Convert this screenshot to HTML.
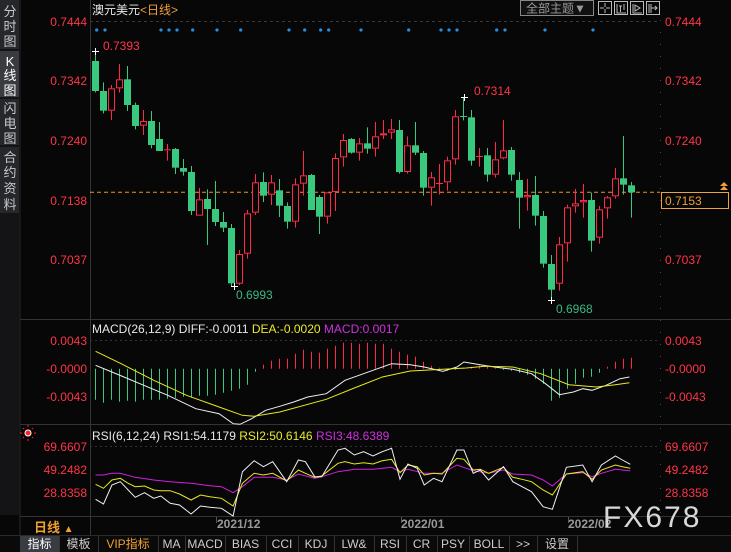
<!DOCTYPE html>
<html><head><meta charset="utf-8">
<style>
html,body{margin:0;padding:0;background:#070707;width:731px;height:552px;overflow:hidden;font-family:"Liberation Sans","Noto Sans CJK SC",sans-serif;}
svg{display:block}
text{font-family:"Liberation Sans","Noto Sans CJK SC",sans-serif;}
</style></head><body>
<svg id="s" width="731" height="552" viewBox="0 0 731 552" xmlns="http://www.w3.org/2000/svg">
<rect width="731" height="552" fill="#070707"/>
<rect x="0" y="0" width="19" height="515" fill="#141416"/>
<rect x="0" y="0" width="19" height="49" fill="#26272b"/>
<rect x="0" y="51" width="19" height="46" fill="#3a3b40"/>
<rect x="0" y="99" width="19" height="46" fill="#26272b"/>
<rect x="0" y="147" width="19" height="66" fill="#26272b"/>
<g fill="#c8c8c8" font-size="13" text-anchor="middle">
<text x="10" y="16">分</text><text x="10" y="31">时</text><text x="10" y="46">图</text>
<text x="10" y="66" fill="#fff">K</text><text x="10" y="80" fill="#fff">线</text><text x="10" y="95" fill="#fff">图</text>
<text x="10" y="113">闪</text><text x="10" y="128">电</text><text x="10" y="143">图</text>
<text x="10" y="162">合</text><text x="10" y="177">约</text><text x="10" y="193">资</text><text x="10" y="209">料</text>
</g>
<line x1="20" y1="0" x2="20" y2="535" stroke="#2a2a2a"/>
<line x1="90.5" y1="0" x2="90.5" y2="535" stroke="#333"/>
<line x1="20" y1="319.5" x2="731" y2="319.5" stroke="#333"/>
<line x1="20" y1="424.5" x2="731" y2="424.5" stroke="#333"/>
<line x1="20" y1="516.5" x2="731" y2="516.5" stroke="#333"/>
<line x1="660.5" y1="20" x2="660.5" y2="515" stroke="#444" stroke-dasharray="1 11"/>
<line x1="90" y1="21.5" x2="660" y2="21.5" stroke="#3a3a3a" stroke-dasharray="3 3"/>
<line x1="90" y1="340.5" x2="660" y2="340.5" stroke="#333" stroke-dasharray="2 3"/>
<line x1="90" y1="446.5" x2="660" y2="446.5" stroke="#333" stroke-dasharray="2 3"/>
<text x="92" y="14" font-size="12" fill="#e8e8e8">澳元美元<tspan fill="#f0a040">&lt;日线&gt;</tspan></text>
<rect x="520.5" y="0.5" width="73" height="15" fill="#111" stroke="#888"/>
<text x="526" y="12.5" font-size="12" fill="#999">全部主题▼</text>
<g stroke="#bbb" fill="none">
<rect x="598.5" y="1.5" width="13" height="13"/><rect x="614.5" y="1.5" width="13" height="13"/><rect x="630.5" y="1.5" width="13" height="13"/><rect x="646.5" y="1.5" width="13" height="13"/>
<path d="M605 3v4M605 9v4M600 8h4M606 8h4"/>
<path d="M617 4v9h9M619 6h3M620.5 6v6M624 4v6"/>
<path d="M633 4v9h9M635 5l5 3-5 3z"/>
<path d="M649 4v9M651 4v9M651 8h6M655 6l2 2-2 2"/>
</g>
<g font-size="12" fill="#ff3548">
<text x="87" y="26" text-anchor="end">0.7444</text>
<text x="87" y="85" text-anchor="end">0.7342</text>
<text x="87" y="145" text-anchor="end">0.7240</text>
<text x="87" y="205" text-anchor="end">0.7138</text>
<text x="87" y="264" text-anchor="end">0.7037</text>
<text x="665" y="26">0.7444</text>
<text x="665" y="85">0.7342</text>
<text x="665" y="145">0.7240</text>
<text x="665" y="264">0.7037</text>
<text x="87" y="345" text-anchor="end">0.0043</text>
<text x="87" y="373" text-anchor="end">-0.0000</text>
<text x="87" y="401" text-anchor="end">-0.0043</text>
<text x="665" y="345">0.0043</text>
<text x="665" y="373">-0.0000</text>
<text x="665" y="401">-0.0043</text>
<text x="87" y="451" text-anchor="end">69.6607</text>
<text x="87" y="474" text-anchor="end">49.2482</text>
<text x="87" y="497" text-anchor="end">28.8358</text>
<text x="665" y="451">69.6607</text>
<text x="665" y="474">49.2482</text>
<text x="665" y="497">28.8358</text>
</g>
<line x1="90" y1="192.3" x2="660" y2="192.3" stroke="#f0902a" stroke-dasharray="4 3"/>
<rect x="661.5" y="192.5" width="67" height="16" fill="#070707" stroke="#f0a040"/>
<text x="665" y="205" font-size="12" fill="#f0a040">0.7153</text>
<path d="M720 186l4-4 4 4zM720 190l4-4 4 4z" fill="#f0a040"/>
<g id="dots" fill="#2a8ee0"></g>
<g id="candles"></g>
<g font-size="12">
<text x="103" y="50" fill="#ff3548">0.7393</text>
<text x="236" y="299" fill="#3bb885">0.6993</text>
<text x="474" y="95" fill="#ff3548">0.7314</text>
<text x="556" y="313" fill="#3bb885">0.6968</text>
</g>
<g stroke="#fff">
<path d="M92 51.5h7M95.5 48v7"/>
<path d="M231 286.5h7M234.5 283v7"/>
<path d="M461 97.5h7M464.5 94v7"/>
<path d="M548 300.5h7M551.5 297v7"/>
</g>
<text x="92" y="333" font-size="12" fill="#e8e8e8">MACD(26,12,9) DIFF:-0.0011 <tspan fill="#e8e830">DEA:-0.0020</tspan> <tspan fill="#d030e0">MACD:0.0017</tspan></text>
<g id="hist"></g>
<polyline id="diff" fill="none" stroke="#f0f0f0" stroke-width="1"/>
<polyline id="dea" fill="none" stroke="#e8e820" stroke-width="1"/>
<circle cx="28" cy="433" r="3" fill="#ff2020" stroke="#fff" stroke-width="1"/>
<path d="M28 427v-2M28 439v2M22 433h-2M34 433h2M24 429l-1-1M32 429l1-1M24 437l-1 1M32 437l1 1" stroke="#ff2020"/>
<text x="92" y="440" font-size="12" fill="#e8e8e8">RSI(6,12,24) RSI1:54.1179 <tspan fill="#e8e830">RSI2:50.6146</tspan> <tspan fill="#d030e0">RSI3:48.6389</tspan></text>
<polyline id="r3" fill="none" stroke="#d020e0"/>
<polyline id="r2" fill="none" stroke="#e8e820"/>
<polyline id="r1" fill="none" stroke="#f0f0f0"/>
<g stroke="#555"><path d="M216.5 517v6M401.5 517v6M568.5 517v6"/></g>
<g font-size="12" fill="#999" font-weight="bold">
<text x="217" y="528">2021/12</text>
<text x="401" y="528">2022/01</text>
<text x="568" y="528">2022/02</text>
</g>
<text x="603" y="527" font-size="30" fill="#d8d8d8" letter-spacing="2">FX678</text>
<text x="34" y="532" font-size="13" fill="#f0a030" font-weight="bold">日线 <tspan font-size="10">▲</tspan></text>
<rect x="0" y="535" width="731" height="17" fill="#0a0a0a"/>
<rect x="20" y="535" width="39" height="17" fill="#3a3c44"/>
<g stroke="#333"><path id="tabsep" d=""/></g>
<g font-size="12" fill="#ccc" text-anchor="middle" id="tabs"></g>
<line x1="0" y1="535.5" x2="731" y2="535.5" stroke="#2a2a2a"/>
</svg>
<script>
var NS="http://www.w3.org/2000/svg";
function el(t,a,p){var e=document.createElementNS(NS,t);for(var k in a)e.setAttribute(k,a[k]);(p||document.getElementById('s')).appendChild(e);return e;}
[96.7,105,161,169,177,192.7,217,240.7,289,304.7,320.7,328.7,361,408.7,441,449,457,496.7,505,545,593].forEach(function(x){el('circle',{cx:x,cy:30,r:1.6},document.getElementById('dots'));});
var C=[
['g',63,153,38,157],['g',153,212,127,220],['r',145,212,135,240],['r',118,145,72,158],['g',118,195,78,213],['g',195,258,188,268],['r',243,257,210,285],['g',243,315,213,325],['g',297,333,246,333],['r',328,330,312,362],
['g',327,383,324,402],['g',384,395,357,407],['g',396,513,378,525],['r',478,527,444,527],['g',477,507,448,615],['g',507,546,423,558],['g',546,563,516,576],['g',564,730,552,738],['r',642,731,630,735],['r',520,641,510,656],
['r',427,518,402,525],['g',426,467,397,486],['r',427,464,405,495],['g',451,497,417,531],['g',498,545,487,566],['r',433,545,415,563],['r',406,431,333,467],['g',405,510,402,510],['g',471,530,465,582],['r',457,530,457,551],
['r',354,456,340,513],['r',300,352,282,380],['g',297,338,294,341],['r',310,338,294,362],['g',310,326,262,341],['r',289,326,246,350],['r',280,286,240,297],['r',268,278,237,297],['g',270,396,240,401],['r',316,396,289,401],
['g',316,338,246,345],['g',339,443,333,467],['r',412,443,396,497],['r',429,431,372,464],['r',361,427,350,452],['r',229,358,210,374],['g',228,230,173,241],['g',232,362,210,377],['r',348,350,324,380],['g',346,404,324,425],
['r',358,404,306,413],['r',331,355,240,358],['g',330,404,321,422],['g',420,473,396,566],['r',465,472,417,512],['g',465,527,408,557],['g',528,671,513,683],['g',672,749,645,785],['r',613,731,591,752],['r',502,610,494,665],
['r',490,499,447,518],['r',480,487,432,533],['g',480,602,458,635],['r',508,593,498,611],['r',472,505,468,536],['r',415,469,384,476],['g',415,434,288,464],['g',436,457,426,533]];
var cg=document.getElementById('candles');
C.forEach(function(c,i){var x=Math.round(95.33+i*8);var y=function(z){return 40+z/3;};
 var col=c[0]=='g'?'#38c97e':'#ff2a48';
 var bt=y(c[1]),bb=y(c[2]);if(bb-bt<1.2){bb=bt+1;}
 if(c[0]=='g'){el('line',{x1:x+0.5,x2:x+0.5,y1:y(c[3]),y2:y(c[4]),stroke:col},cg);el('rect',{x:x-3,y:bt,width:7,height:Math.max(1,bb-bt),fill:col},cg);}
 else{el('line',{x1:x+0.5,x2:x+0.5,y1:y(c[3]),y2:bt,stroke:col},cg);el('line',{x1:x+0.5,x2:x+0.5,y1:bb,y2:y(c[4]),stroke:col},cg);
  if(bb-bt<2){el('line',{x1:x-3,x2:x+4,y1:bt+0.5,y2:bt+0.5,stroke:col},cg);}else el('rect',{x:x-2.5,y:bt+0.5,width:6,height:bb-bt-1,fill:'#070707',stroke:col},cg);}
});
var H=[-31,-34,-31,-33,-32,-33,-31,-31,-31,-30,-29,-28,-29,-27,-27,-26,-24,-22,-20,-16,-3,4,8,10,10,15,19,17,16,20,23,26,26,25,26,25,25,20,17,14,12,7,3,1,-2,-1,1,2,3,2,1,-1,-2,-4,-6,-10,-15,-32,-29,-20,-15,-9,-8,-4,2,7,10,11];
var hg=document.getElementById('hist');
H.forEach(function(h,i){var x=Math.round(95.33+i*8)+0.5;el('line',{x1:x,x2:x,y1:368.7,y2:368.7-h,stroke:h>0?'#ff2a48':'#38c97e'},hg);});
function pts(a,oy){return a.map(function(p){return (p[0]/2.145).toFixed(1)+','+(oy+p[1]/3).toFixed(1);}).join(' ');}
document.getElementById('diff').setAttribute('points',pts([[205,160],[240,180],[300,215],[360,250],[420,290],[470,305],[500,335],[515,337],[540,320],[570,295],[600,283],[630,270],[660,255],[700,245],[740,205],[800,175],[840,155],[880,158],[910,165],[950,178],[980,165],[995,150],[1030,158],[1060,165],[1100,172],[1140,185],[1170,215],[1200,248],[1230,240],[1250,230],[1270,235],[1300,220],[1330,200],[1350,195]],312));
document.getElementById('dea').setAttribute('points',pts([[205,118],[260,155],[330,205],[400,250],[470,285],[520,310],[545,313],[600,300],[700,262],[760,228],[820,195],[880,177],[950,172],[1000,168],[1040,163],[1100,165],[1160,185],[1220,218],[1280,225],[1320,218],[1350,212]],312));
document.getElementById('r1').setAttribute('points',pts([[205,238],[222,252],[240,195],[258,185],[275,210],[290,232],[310,218],[330,235],[345,228],[365,250],[385,255],[410,282],[430,258],[450,262],[475,265],[500,288],[520,155],[545,122],[565,140],[585,125],[615,185],[640,120],[655,125],[675,170],[690,170],[725,90],[740,85],[760,105],[780,95],[800,108],[820,95],[840,85],[858,178],[875,132],[895,145],[910,195],[930,175],[948,185],[980,90],[995,90],[1015,160],[1030,150],[1048,180],[1080,140],[1100,185],[1120,200],[1140,215],[1165,260],[1185,268],[1215,142],[1250,135],[1270,185],[1290,135],[1320,108],[1335,120],[1352,133]],420));
document.getElementById('r2').setAttribute('points',pts([[205,193],[222,205],[240,180],[258,175],[275,190],[290,200],[310,198],[330,210],[345,212],[365,212],[385,222],[410,240],[430,225],[450,230],[475,235],[500,258],[520,190],[545,160],[565,165],[585,160],[615,183],[640,150],[655,160],[675,172],[690,168],[725,130],[740,125],[760,132],[780,128],[800,132],[820,122],[840,118],[858,158],[875,135],[895,140],[910,165],[930,160],[948,162],[980,115],[995,118],[1015,150],[1030,148],[1048,160],[1080,142],[1100,172],[1120,178],[1140,185],[1165,210],[1185,225],[1215,162],[1250,155],[1270,178],[1290,150],[1320,135],[1335,140],[1352,145]],420));
document.getElementById('r3').setAttribute('points',pts([[205,165],[222,165],[240,160],[258,160],[290,172],[330,180],[365,185],[410,190],[450,197],[475,200],[500,218],[520,200],[545,172],[585,172],[615,180],[640,162],[675,175],[690,170],[725,155],[760,148],[800,148],[840,142],[858,155],[875,148],[910,160],[948,160],[980,135],[1015,152],[1048,160],[1080,150],[1100,162],[1140,165],[1165,180],[1185,198],[1215,162],[1250,158],[1270,170],[1290,160],[1320,148],[1352,152]],420));
var T=[['指标',20,59,'#fff'],['模板',59,98],['VIP指标',98,158,'#f0a030'],['MA',158,185],['MACD',185,225],['BIAS',225,266],['CCI',266,298],['KDJ',298,334],['LW&',334,374],['RSI',374,406],['CR',406,437],['PSY',437,469],['BOLL',469,509],['>>',509,537],['设置',537,577]];
var tg=document.getElementById('tabs'),d='';
T.forEach(function(t){var e=el('text',{x:(t[1]+t[2])/2,y:548},tg);e.textContent=t[0];if(t[3])e.setAttribute('fill',t[3]);d+='M'+(t[2]+0.5)+' 536v16';});
document.getElementById('tabsep').setAttribute('d',d);
</script>
</body></html>
